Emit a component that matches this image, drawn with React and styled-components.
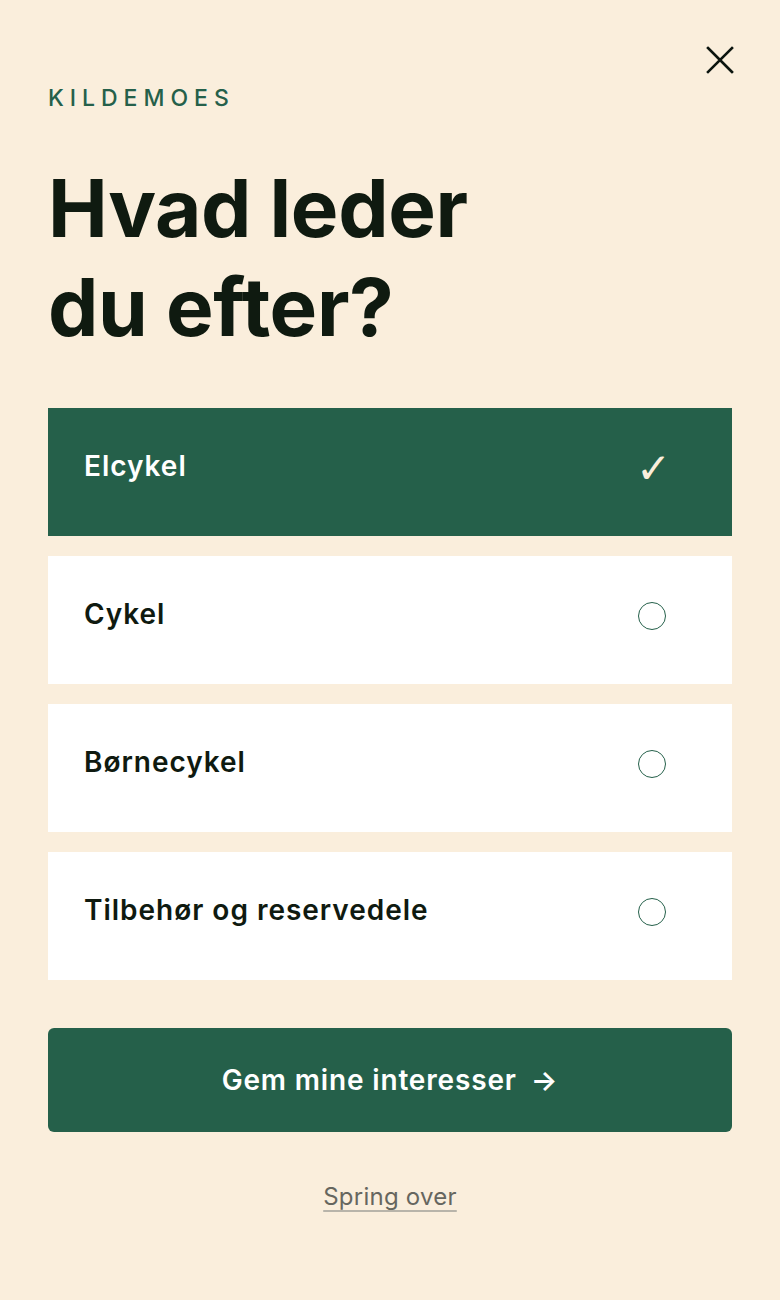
import React, { useState } from "react";
import styled, { createGlobalStyle } from "styled-components";

const Global = createGlobalStyle`
  html, body { margin: 0; padding: 0; background: #faeedc; }
  body { font-family: Inter, "Noto Sans", sans-serif; }
  * { box-sizing: border-box; }
`;

const Page = styled.div`
  min-height: 1300px;
  background: #faeedc;
  padding: 46px 48px 80px;
  display: flex;
  flex-direction: column;
`;

const TopBar = styled.div`
  display: flex;
  justify-content: flex-end;
  height: 28px;
  margin-right: -2px;
`;

const CloseButton = styled.button`
  background: none;
  border: none;
  padding: 0;
  width: 28px;
  height: 28px;
  cursor: pointer;
  color: #0c150f;
`;

const Brand = styled.div`
  margin-top: 10px;
  font-size: 23px;
  font-weight: 500;
  letter-spacing: 0.26em;
  color: #25604a;
  line-height: 28px;
`;

const Title = styled.h1`
  margin: 46px 0 0;
  font-size: 80px;
  font-weight: 700;
  line-height: 99px;
  letter-spacing: -0.005em;
  color: #0f1a10;
`;

const Options = styled.div`
  margin-top: 52px;
  display: flex;
  flex-direction: column;
  gap: 20px;
`;

const Card = styled.button`
  display: block;
  width: 100%;
  min-height: 128px;
  border: none;
  text-align: left;
  padding: 20px 66px 32px 36px;
  background: ${(p) => (p.$selected ? "#25604a" : "#ffffff")};
  color: ${(p) => (p.$selected ? "#ffffff" : "#0f1a10")};
  font-family: inherit;
  cursor: pointer;
`;

const CardRow = styled.div`
  display: flex;
  align-items: center;
  justify-content: space-between;
  height: 48px;
`;

const Label = styled.span`
  font-size: 28px;
  font-weight: 600;
  letter-spacing: 0.035em;
`;

const Radio = styled.span`
  width: 28px;
  height: 28px;
  border-radius: 50%;
  border: 1.5px solid #25604a;
  margin-top: 4px;
`;

const Check = styled.span`
  width: 32px;
  text-align: center;
  font-size: 42px;
  line-height: 1;
  color: #faeedc;
  font-family: "DejaVu Sans", sans-serif;
  margin-top: 6px;
  margin-right: -2px;
`;

const Submit = styled.button`
  margin-top: 48px;
  width: 100%;
  height: 104px;
  border: none;
  border-radius: 6px;
  background: #25604a;
  color: #ffffff;
  font-family: inherit;
  font-size: 28px;
  font-weight: 600;
  letter-spacing: 0.03em;
  display: flex;
  align-items: center;
  justify-content: center;
  gap: 14px;
  cursor: pointer;
`;

const Skip = styled.a`
  margin-top: 50px;
  align-self: center;
  font-size: 24px;
  color: #66665f;
  text-decoration: underline;
  text-decoration-color: #b8b4aa;
  text-underline-offset: 5px;
  text-decoration-thickness: 1.5px;
  letter-spacing: 0.01em;
  cursor: pointer;
`;

const items = ["Elcykel", "Cykel", "Børnecykel", "Tilbehør og reservedele"];

export default function App() {
  const [sel, setSel] = useState({ Elcykel: true });
  return (
    <>
      <Global />
      <Page>
        <TopBar>
          <CloseButton aria-label="Luk">
            <svg width="28" height="28" viewBox="0 0 28 28" fill="none" stroke="currentColor" strokeWidth="2.6" strokeLinecap="square">
              <path d="M2 2 L26 26 M26 2 L2 26" />
            </svg>
          </CloseButton>
        </TopBar>
        <Brand>KILDEMOES</Brand>
        <Title>
          Hvad leder
          <br />
          du efter?
        </Title>
        <Options>
          {items.map((it) => (
            <Card key={it} $selected={!!sel[it]} onClick={() => setSel((s) => ({ ...s, [it]: !s[it] }))}>
              <CardRow>
                <Label>{it}</Label>
                {sel[it] ? <Check>✓</Check> : <Radio />}
              </CardRow>
            </Card>
          ))}
        </Options>
        <Submit>
          Gem mine interesser <span>→</span>
        </Submit>
        <Skip>Spring over</Skip>
      </Page>
    </>
  );
}
